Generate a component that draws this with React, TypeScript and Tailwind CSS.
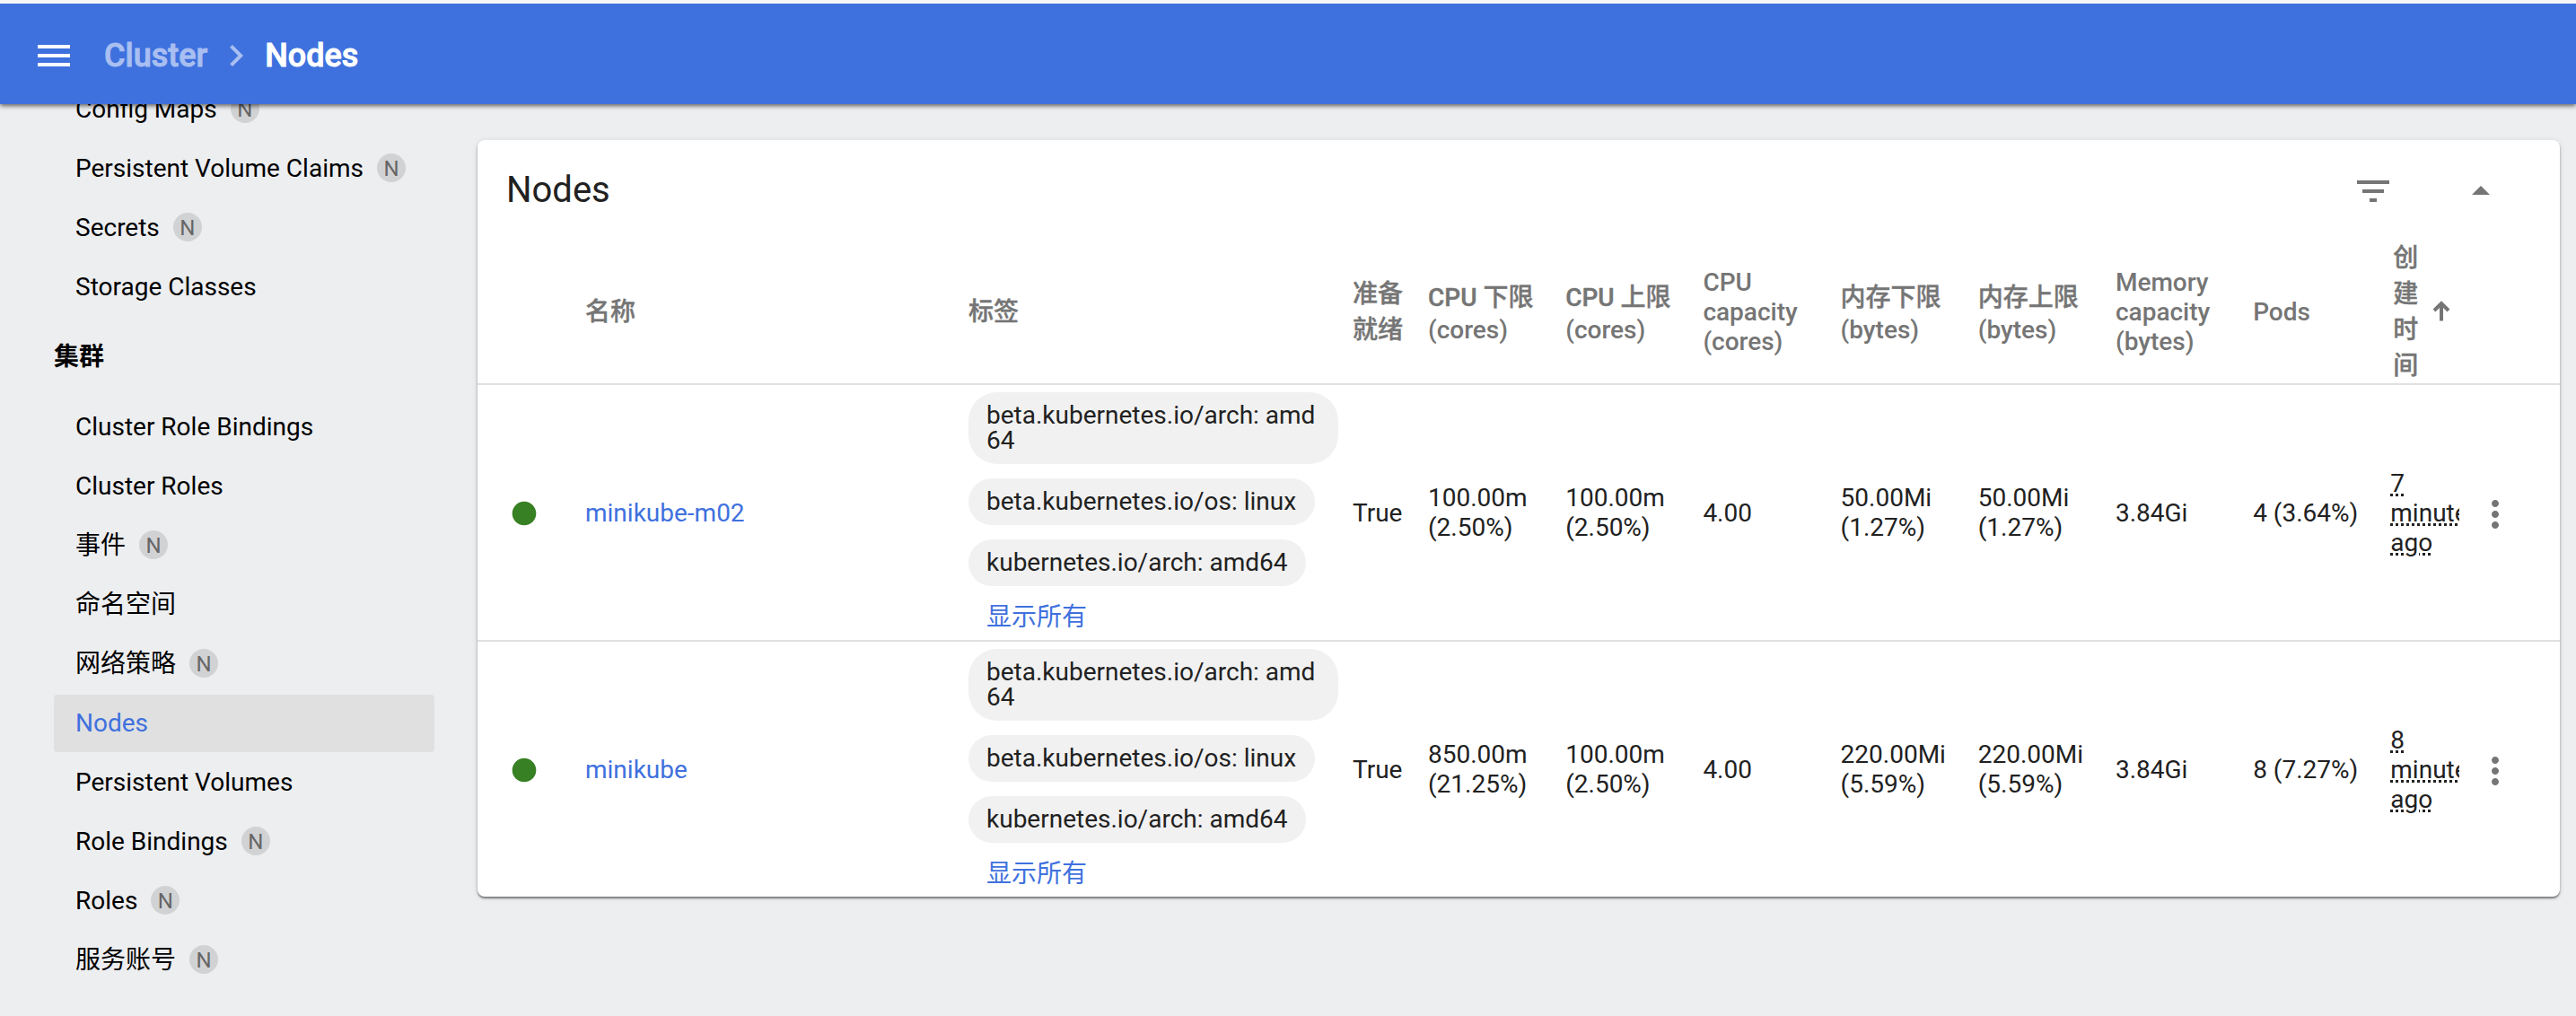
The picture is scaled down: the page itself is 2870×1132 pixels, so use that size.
import React from 'react';

type NavItem = { label: string; badge?: boolean; active?: boolean };

const configItems: NavItem[] = [
  { label: 'Config Maps', badge: true },
  { label: 'Persistent Volume Claims', badge: true },
  { label: 'Secrets', badge: true },
  { label: 'Storage Classes' },
];

const clusterItems: NavItem[] = [
  { label: 'Cluster Role Bindings' },
  { label: 'Cluster Roles' },
  { label: '事件', badge: true },
  { label: '命名空间' },
  { label: '网络策略', badge: true },
  { label: 'Nodes', active: true },
  { label: 'Persistent Volumes' },
  { label: 'Role Bindings', badge: true },
  { label: 'Roles', badge: true },
  { label: '服务账号', badge: true },
];

const labels = [
  ['beta.kubernetes.io/arch: amd', '64'],
  ['beta.kubernetes.io/os: linux'],
  ['kubernetes.io/arch: amd64'],
];

const nodes = [
  {
    name: 'minikube-m02',
    cells: [['100.00m', '(2.50%)'], ['100.00m', '(2.50%)'], ['4.00'], ['50.00Mi', '(1.27%)'], ['50.00Mi', '(1.27%)'], ['3.84Gi'], ['4 (3.64%)']],
    age: ['7', 'minutes', 'ago'],
  },
  {
    name: 'minikube',
    cells: [['850.00m', '(21.25%)'], ['100.00m', '(2.50%)'], ['4.00'], ['220.00Mi', '(5.59%)'], ['220.00Mi', '(5.59%)'], ['3.84Gi'], ['8 (7.27%)']],
    age: ['8', 'minutes', 'ago'],
  },
];

const headers: string[][] = [
  ['名称'],
  ['标签'],
  ['准备', '就绪'],
  ['CPU 下限', '(cores)'],
  ['CPU 上限', '(cores)'],
  ['CPU', 'capacity', '(cores)'],
  ['内存下限', '(bytes)'],
  ['内存上限', '(bytes)'],
  ['Memory', 'capacity', '(bytes)'],
  ['Pods'],
];

const hasHan = (s: string) => /[\u4e00-\u9fff]/.test(s);

const rowGrid =
  'grid grid-cols-[120px_427px_428px_84px_repeat(7,153.2px)_77px_1fr] items-center';

function Icon({ d, className }: { d: string; className?: string }) {
  return (
    <svg viewBox="0 0 24 24" className={`size-12 shrink-0 fill-current ${className ?? ''}`}>
      <path d={d} />
    </svg>
  );
}

function Item({ label, badge, active }: NavItem) {
  return (
    <li
      className={`mb-0.5 flex h-16 items-center rounded px-6 ${
        active ? 'bg-[#e0e0e0] text-[#3f71de]' : 'text-black'
      }`}
    >
      <span className="leading-[34px]">{label}</span>
      {badge && (
        <span className="mb-0.5 ml-[15px] flex size-8 items-center justify-center rounded-full bg-[#d1d2d4] pt-0.5 text-[24px] leading-none text-[#666]">
          N
        </span>
      )}
    </li>
  );
}

export default function App() {
  return (
    <div className="flex h-[1132px] w-[2870px] flex-col overflow-hidden bg-[#edeef0] font-[Roboto,'Noto_Sans_CJK_SC',sans-serif] text-[28px] text-[#212121]">
      <header className="relative z-10 mt-1 flex h-28 shrink-0 items-center bg-[#3f71de] pl-9 pt-1 text-[36px] font-medium text-white shadow-[0_-4px_0_#f6f6f6,0_2px_5px_rgba(0,0,0,0.6)] [-webkit-text-stroke:0.9px]">
        <Icon d="M3 18h18v-2H3v2zm0-5h18v-2H3v2zm0-7v2h18V6H3z" />
        <span className="ml-8 text-[#a9bff1]">Cluster</span>
        <Icon d="M10 6L8.59 7.41 13.17 12l-4.58 4.59L10 18l6-6z" className="mx-2 text-[#a9bff1]" />
        <span>Nodes</span>
      </header>

      <div className="flex min-h-0 flex-1">
        <nav className="-mt-[26px] w-[484px] shrink-0 pl-[60px]">
          <ul>{configItems.map((i) => <Item key={i.label} {...i} />)}</ul>
          <h2 className="flex h-[90px] items-center pb-0.5 text-[28px] font-bold text-black">集群</h2>
          <ul>{clusterItems.map((i) => <Item key={i.label} {...i} />)}</ul>
        </nav>

        <main className="ml-12 mt-10 h-[843px] w-[2320px] rounded-lg bg-white shadow-[0_2px_2px_rgba(0,0,0,0.45),0_1px_6px_rgba(0,0,0,0.12)]">
          <div className="flex h-[110px] items-center pb-0.5 pl-8 pr-16 pt-1">
            <h1 className="flex-1 text-[40px] leading-none">Nodes</h1>
            <Icon d="M10 18h4v-2h-4v2zM3 6v2h18V6H3zm3 7h12v-2H6v2z" className="mt-0.5 text-[#757575]" />
            <Icon d="M7 14l5-5 5 5z" className="ml-[72px] mt-0.5 text-[#757575]" />
          </div>

          <div className={`${rowGrid} h-[163px] border-b-2 border-[#e0e0e0] pt-0.5 font-medium text-[#757575]`}>
            <span />
            {headers.map((h, i) => (
              <div key={i}>
                {h.map((line) => (
                  <div
                    key={line}
                    className={`whitespace-nowrap ${
                      hasHan(line) ? 'leading-[40px] [-webkit-text-stroke:0.4px]' : '-translate-y-px leading-[33px]'
                    }`}
                  >
                    {line}
                  </div>
                ))}
              </div>
            ))}
            <div className="flex items-center pl-[3px]">
              <div className="w-7 leading-[40px] [-webkit-text-stroke:0.4px]">创建时间</div>
              <svg viewBox="0 0 20 24" className="mb-1 ml-4 h-6 w-5 shrink-0 fill-none stroke-[#757575] stroke-4">
                <path d="M10 23.5V4M2 12l8-8 8 8" />
              </svg>
            </div>
          </div>

          {nodes.map((n, r) => (
            <div key={n.name} className={`${rowGrid} ${r === 0 ? 'h-[286px] border-b-2 border-[#e0e0e0]' : 'h-[284px]'}`}>
              <Icon
                d="M12 2C6.47 2 2 6.47 2 12s4.47 10 10 10 10-4.47 10-10S17.53 2 12 2z"
                className="ml-9 mt-0.5 !size-8 text-[#388024]"
              />
              <a className="pt-0.5 text-[#3f71de]">{n.name}</a>
              <div className="flex h-[268px] flex-col items-start">
                {labels.map((l) => (
                  <div key={l[0]} className={`mb-4 rounded-[32px] bg-[#f1f1f1] py-3 pl-5 leading-7 ${l.length > 1 ? 'w-[412px]' : 'pr-[21px]'}`}>
                    {l.map((t) => <div key={t}>{t}</div>)}
                  </div>
                ))}
                <a className="ml-5 pt-[3px] leading-8 text-[#3f71de]">显示所有</a>
              </div>
              <span className="pt-0.5">True</span>
              {n.cells.map((c, i) => (
                <div key={i} className="whitespace-nowrap leading-[33px]">
                  {c.map((t) => <div key={t}>{t}</div>)}
                </div>
              ))}
              <div className="overflow-hidden leading-[33px]">
                {n.age.map((t) => (
                  <div key={t} className="underline decoration-dotted decoration-[3px] underline-offset-[2px]">{t}</div>
                ))}
              </div>
              <Icon
                d="M12 8c1.1 0 2-.9 2-2s-.9-2-2-2-2 .9-2 2 .9 2 2 2zm0 2c-1.1 0-2 .9-2 2s.9 2 2 2 2-.9 2-2-.9-2-2-2zm0 6c-1.1 0-2 .9-2 2s.9 2 2 2 2-.9 2-2-.9-2-2-2z"
                className="ml-4 mt-1 text-[#757575]"
              />
            </div>
          ))}
        </main>
      </div>
    </div>
  );
}
